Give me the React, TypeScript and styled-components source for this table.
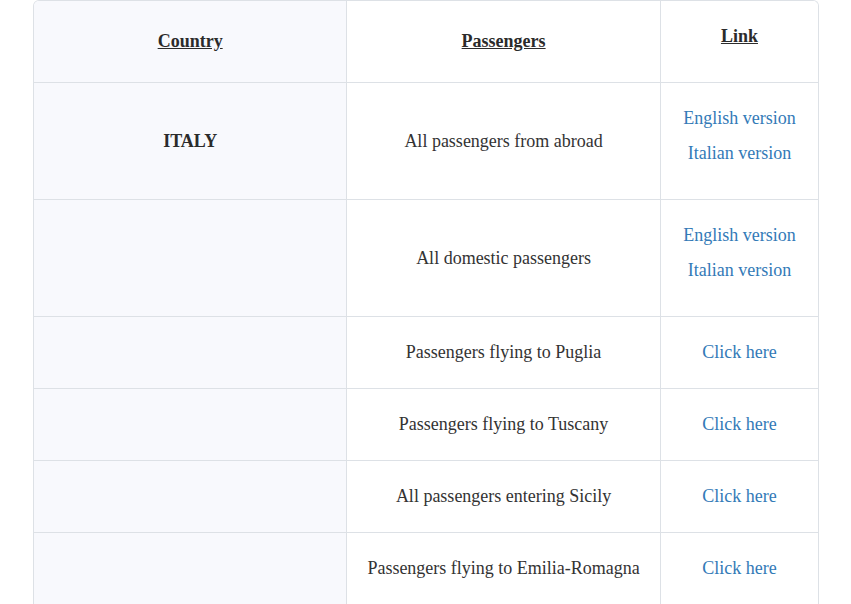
import React from "react";
import styled, { createGlobalStyle } from "styled-components";

const Global = createGlobalStyle`
  html, body { margin: 0; padding: 0; background: #ffffff; }
  body { font-family: "Liberation Serif", "Times New Roman", serif; color: #333333; }
`;

const Page = styled.div`
  padding: 0 32px 0 33px;
`;

const Frame = styled.div`
  border: 1px solid #dde1e6;
  border-bottom: none;
  border-radius: 6px 6px 0 0;
  overflow: hidden;
`;

const Table = styled.table`
  width: 100%;
  border-collapse: collapse;
  table-layout: fixed;
  font-size: 18px;
  line-height: 25px;
`;

const Cell = styled.td<{ $shade?: boolean; $last?: boolean }>`
  padding: 23px 8px;
  text-align: center;
  vertical-align: middle;
  border-top: 1px solid #dde1e6;
  border-right: ${(p) => (p.$last ? "none" : "1px solid #dde1e6")};
  background: ${(p) => (p.$shade ? "#f8f9fd" : "#ffffff")};
  color: #333333;
`;

const HeadCell = styled(Cell).attrs({ as: "th" })`
  border-top: none;
  font-weight: bold;
`;

const HeadLabel = styled.span`
  text-decoration: underline;
  color: #2b2b2b;
`;

const Para = styled.p`
  margin: 0 0 10px;
`;

const Bold = styled.strong`
  font-weight: bold;
  color: #2b2b2b;
`;

const Link = styled.a`
  color: #337ab7;
  text-decoration: none;
`;

type Row = { country?: string; who: string; links: string[] };

const rows: Row[] = [
  { country: "ITALY", who: "All passengers from abroad", links: ["English version", "Italian version"] },
  { who: "All domestic passengers", links: ["English version", "Italian version"] },
  { who: "Passengers flying to Puglia", links: ["Click here"] },
  { who: "Passengers flying to Tuscany", links: ["Click here"] },
  { who: "All passengers entering Sicily", links: ["Click here"] },
  { who: "Passengers flying to Emilia-Romagna", links: ["Click here"] },
];

export default function App() {
  return (
    <Page>
      <Global />
      <Frame>
        <Table>
          <colgroup>
            <col style={{ width: "39.9%" }} />
            <col style={{ width: "40%" }} />
            <col style={{ width: "20.1%" }} />
          </colgroup>
          <thead>
            <tr>
              <HeadCell $shade>
                <HeadLabel>Country</HeadLabel>
              </HeadCell>
              <HeadCell>
                <HeadLabel>Passengers</HeadLabel>
              </HeadCell>
              <HeadCell $last>
                <Para>
                  <HeadLabel>Link</HeadLabel>
                </Para>
              </HeadCell>
            </tr>
          </thead>
          <tbody>
            {rows.map((r, i) => (
              <tr key={i}>
                <Cell $shade>{r.country ? <Bold>{r.country}</Bold> : null}</Cell>
                <Cell>{r.who}</Cell>
                <Cell $last>
                  {r.links.length > 1
                    ? r.links.map((l) => (
                        <Para key={l}>
                          <Link href="#">{l}</Link>
                        </Para>
                      ))
                    : <Link href="#">{r.links[0]}</Link>}
                </Cell>
              </tr>
            ))}
          </tbody>
        </Table>
      </Frame>
    </Page>
  );
}
